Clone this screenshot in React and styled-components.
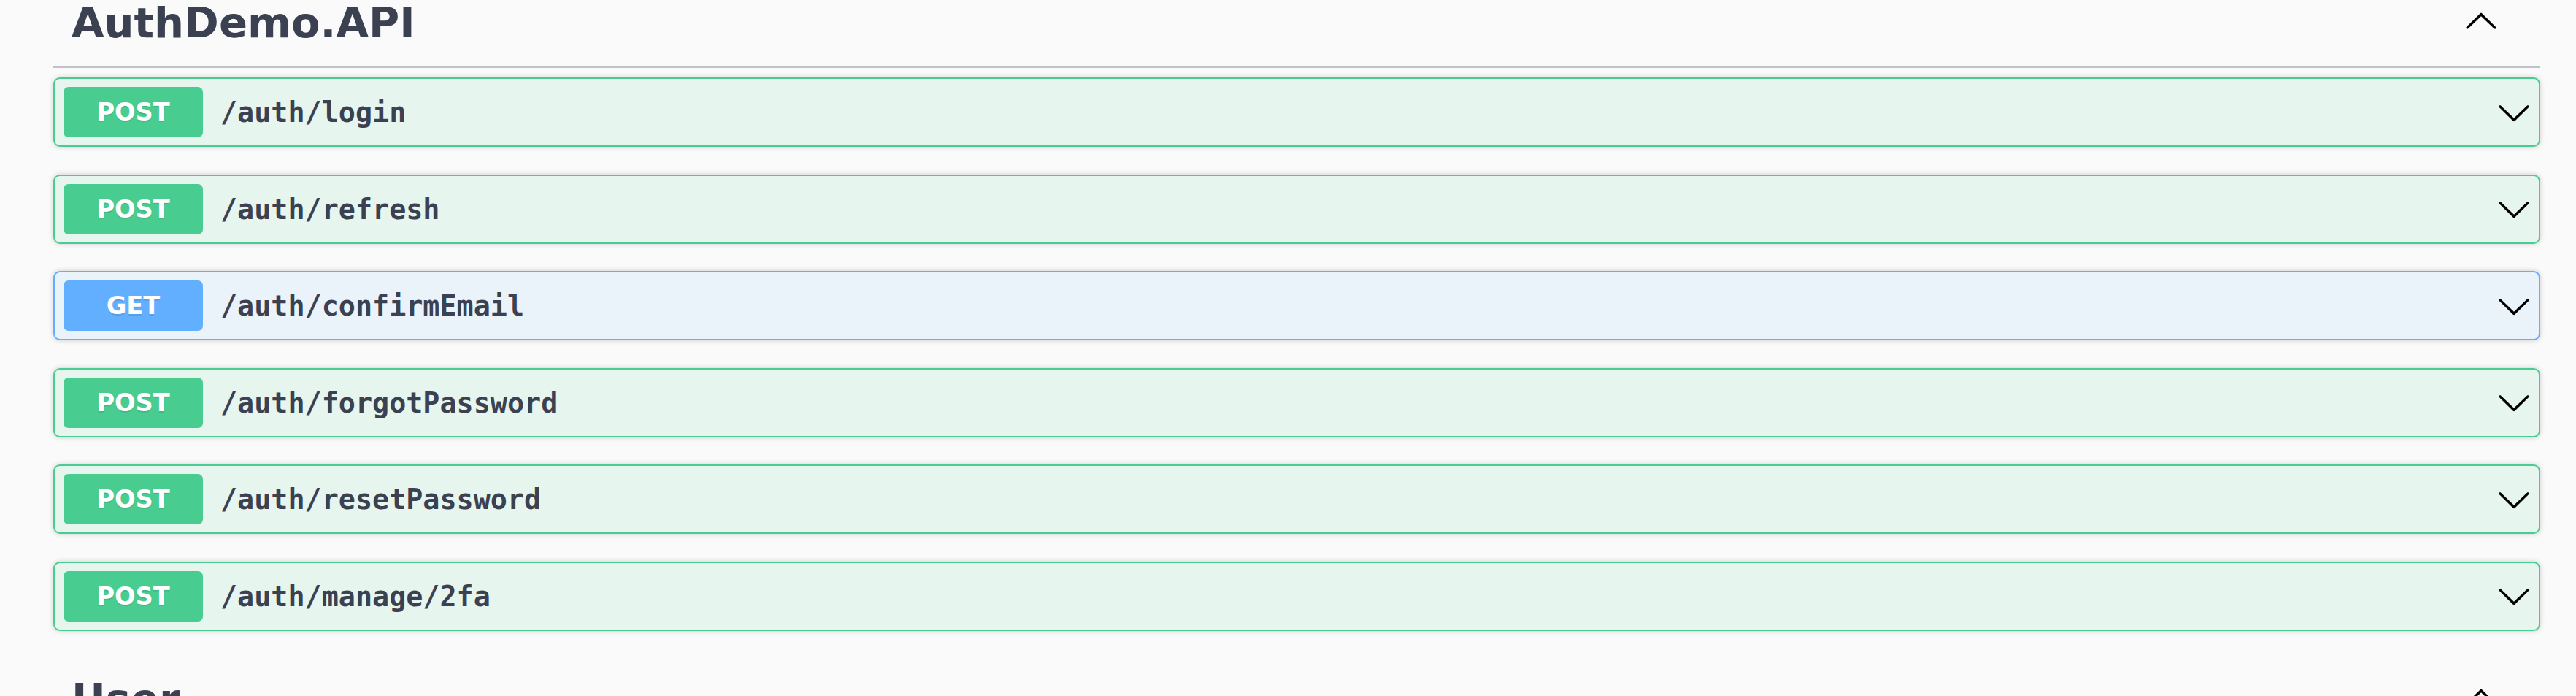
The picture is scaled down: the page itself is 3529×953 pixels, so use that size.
import React from "react";
import styled, { createGlobalStyle } from "styled-components";

const GlobalStyle = createGlobalStyle`
  html, body {
    margin: 0;
    padding: 0;
    background: #fafafa;
  }
  body {
    font-family: "DejaVu Sans", "Liberation Sans", sans-serif;
    color: #3b4151;
  }
`;

// method colours, same as swagger-ui
const methods = {
  post: { main: "#49cc90", bg: "rgba(73, 204, 144, 0.1)" },
  get: { main: "#61affe", bg: "rgba(97, 175, 254, 0.1)" },
};

const endpoints = [
  { method: "post", path: "/auth/login" },
  { method: "post", path: "/auth/refresh" },
  { method: "get", path: "/auth/confirmEmail" },
  { method: "post", path: "/auth/forgotPassword" },
  { method: "post", path: "/auth/resetPassword" },
  { method: "post", path: "/auth/manage/2fa" },
];

const ArrowPath =
  "M17.418 6.109c.272-.268.709-.268.979 0s.271.701 0 .969l-7.908 7.83c-.27.268-.707.268-.979 0l-7.908-7.83c-.27-.268-.27-.701 0-.969.271-.268.709-.268.979 0L10 13.25l7.418-7.141z";

const Arrow = ({ up }) => (
  <ArrowSvg viewBox="0 0 20 20" $up={up}>
    <path d={ArrowPath} fill="#000" />
  </ArrowSvg>
);

const Section = ({ title, children }) => (
  <TagSection>
    <TagHeading>
      <TagTitle>{title}</TagTitle>
      <Arrow up />
    </TagHeading>
    {children && <Operations>{children}</Operations>}
  </TagSection>
);

const App = () => {
  return (
    <Page>
      <GlobalStyle />
      <Section title="AuthDemo.API">
        {endpoints.map((ep) => (
          <OpBlock key={ep.path} $method={ep.method}>
            <MethodBadge $method={ep.method}>{ep.method.toUpperCase()}</MethodBadge>
            <OpPath>{ep.path}</OpPath>
            <Arrow />
          </OpBlock>
        ))}
      </Section>
      <Section title="User" />
    </Page>
  );
};

export default App;

const Page = styled.div`
  width: 3529px;
  height: 953px;
  overflow: hidden;
  box-sizing: border-box;
  padding: 0 49px 0 73px;
  display: flex;
  flex-direction: column;
  gap: 25px;
`;

const TagSection = styled.div`
  display: flex;
  flex-direction: column;
  flex-shrink: 0;
`;

const TagHeading = styled.div`
  box-sizing: border-box;
  height: 93px;
  flex-shrink: 0;
  display: flex;
  align-items: flex-start;
  justify-content: space-between;
  padding: 3px 57px 0 25px;
  border-bottom: 2px solid rgba(59, 65, 81, 0.3);
`;

const TagTitle = styled.h3`
  margin: 0;
  font-family: "DejaVu Sans", sans-serif;
  font-size: 57.6px;
  line-height: 58px;
  font-weight: 700;
  color: #3b4151;
`;

const ArrowSvg = styled.svg`
  width: 48px;
  height: 48px;
  flex-shrink: 0;
  margin-top: ${(p) => (p.$up ? "3px" : "0")};
  transform: ${(p) => (p.$up ? "rotate(180deg)" : "none")};
`;

const Operations = styled.div`
  margin-top: 13px;
  padding-bottom: 37.5px;
  display: flex;
  flex-direction: column;
  gap: 37.5px;
`;

const OpBlock = styled.div`
  box-sizing: border-box;
  height: 95px;
  display: flex;
  align-items: center;
  padding: 0 10px 0 12px;
  border: 2px solid ${(p) => methods[p.$method].main};
  background: ${(p) => methods[p.$method].bg};
  border-radius: 9px;
  box-shadow: 0 0 7px rgba(0, 0, 0, 0.19);
`;

const MethodBadge = styled.span`
  box-sizing: border-box;
  width: 191px;
  height: 69px;
  flex-shrink: 0;
  display: flex;
  align-items: center;
  justify-content: center;
  border-radius: 7px;
  background: ${(p) => methods[p.$method].main};
  color: #fff;
  font-family: "DejaVu Sans", sans-serif;
  font-weight: 700;
  font-size: 33.6px;
  text-shadow: 0 2px 0 rgba(0, 0, 0, 0.1);
`;

const OpPath = styled.span`
  flex: 1;
  padding-left: 24px;
  font-family: "DejaVu Sans Mono", "Liberation Mono", monospace;
  font-weight: 600;
  font-size: 38.4px;
  color: #3b4151;
`;
